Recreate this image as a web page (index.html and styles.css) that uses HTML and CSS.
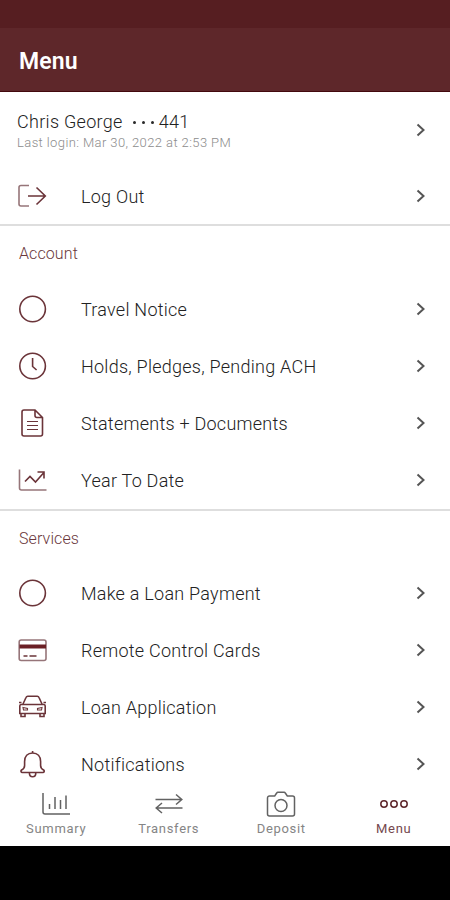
FILE: index.html
```html
<!DOCTYPE html>
<html lang="en">
<head>
<meta charset="utf-8">
<title>Menu</title>
<link rel="stylesheet" href="styles.css">
</head>
<body>
<svg class="defs" aria-hidden="true">
  <symbol id="chevron" viewBox="0 0 10 14"><path d="M1.500 1.500 7.500 7 1.500 12.500"/></symbol>
  <symbol id="circle" viewBox="0 0 30 30"><circle cx="14.600" cy="15" r="12.800"/></symbol>
</svg>
<div class="phone">
  <div class="status"></div>
  <header class="header"><h1>Menu</h1></header>
  <main class="content">
    <section class="section">
      <a class="profile">
        <div class="who">
          <div class="name">Chris George<span class="mask"><i></i><i></i><i></i></span>441</div>
          <div class="login">Last login: Mar 30, 2022 at 2:53 PM</div>
        </div>
        <svg class="chevron"><use href="#chevron"/></svg>
      </a>
      <a class="row logout">
        <svg class="icon" viewBox="0 0 30 30"><path class="muted" d="M11 4.500H3a2 2 0 0 0-2 2v16.500a2 2 0 0 0 2 2h8"/><path d="M10 15h17M18.500 6.500l8.800 8.500-8.800 8.500"/></svg>
        <span class="label">Log Out</span>
        <svg class="chevron"><use href="#chevron"/></svg>
      </a>
    </section>
    <section class="section">
      <h2>Account</h2>
      <a class="row"><svg class="icon"><use href="#circle"/></svg><span class="label">Travel Notice</span><svg class="chevron"><use href="#chevron"/></svg></a>
      <a class="row"><svg class="icon"><use href="#circle"/><path d="M14.600 7v8.500l4 3.500"/></svg><span class="label">Holds, Pledges, Pending ACH</span><svg class="chevron"><use href="#chevron"/></svg></a>
      <a class="row"><svg class="icon" viewBox="0 0 30 30"><path d="M17 2H6a2 2 0 0 0-2 2v22a2 2 0 0 0 2 2h16.500a2 2 0 0 0 2-2V9.500ZM17 2v5.500a2 2 0 0 0 2 2h5.500"/><path class="thin" d="M9 13.500h11M9 17.500h11M9 21.500h11"/></svg><span class="label">Statements + Documents</span><svg class="chevron"><use href="#chevron"/></svg></a>
      <a class="row"><svg class="icon" viewBox="0 0 30 30"><path class="muted" d="M1.500 4.500v18.500a2 2 0 0 0 2 2h25"/><path d="m7 16.500 5-5 5.500 5.500 8-9M19.500 7h6.500v6.500"/></svg><span class="label">Year To Date</span><svg class="chevron"><use href="#chevron"/></svg></a>
    </section>
    <section class="section">
      <h2>Services</h2>
      <a class="row"><svg class="icon"><use href="#circle"/></svg><span class="label">Make a Loan Payment</span><svg class="chevron"><use href="#chevron"/></svg></a>
      <a class="row"><svg class="icon" viewBox="0 0 30 30"><rect class="muted" x="1.200" y="5" width="26.800" height="20.500" rx="2"/><path class="stripe" d="M1.500 11.500h26.500"/><path d="M5.500 21h4m2 0h7"/></svg><span class="label">Remote Control Cards</span><svg class="chevron"><use href="#chevron"/></svg></a>
      <a class="row"><svg class="icon" viewBox="0 0 30 30"><path d="M5 12 8 5.500a2 2 0 0 1 2-1.200h9a2 2 0 0 1 2 1.200L24 12M3 12.500h23a1.500 1.500 0 0 1 1.200 1.500v7.500H1.800V14a1.500 1.500 0 0 1 1.200-1.500ZM3.500 10.500H1M25.500 10.500h2.500M3 21.500v3h4v-3M22 21.500v3h4v-3"/><path class="thin" d="M5 15.500l4.500 1v1.500h-4zM24 15.500l-4.500 1v1.500h4z"/></svg><span class="label">Loan Application</span><svg class="chevron"><use href="#chevron"/></svg></a>
      <a class="row"><svg class="icon" viewBox="0 0 30 30"><path d="M14.600 2v2M14.600 4c-5 0-8 3.500-8 8.500v4c0 2-1 3.500-3 4.500-1 .7-.8 2.500.8 2.500h20.400c1.600 0 1.800-1.800.8-2.500-2-1-3-2.500-3-4.500v-4c0-5-3-8.500-8-8.500ZM11.400 24c0 5 6.400 5 6.400 0"/></svg><span class="label">Notifications</span><svg class="chevron"><use href="#chevron"/></svg></a>
    </section>
  </main>
  <nav class="tabs">
    <a class="tab"><svg class="tab-icon" viewBox="0 0 30 28"><path d="M2 3v19a2 2 0 0 0 2 2h25M8.500 14v5M14 7v12M19.500 10v9M25 5.500V19"/></svg><span>Summary</span></a>
    <a class="tab"><svg class="tab-icon" viewBox="0 0 30 28"><path d="M1.500 9.500h26M22 4.500l5.800 5-5.800 5M28.500 18h-26M8 13l-5.800 5L8 23"/></svg><span>Transfers</span></a>
    <a class="tab"><svg class="tab-icon" viewBox="0 0 30 28"><path d="M3.500 6h5.200l2-3a1.500 1.500 0 0 1 1.200-.7h6.200a1.500 1.500 0 0 1 1.200.7l2 3h5.200a2 2 0 0 1 2 2V24a2 2 0 0 1-2 2h-23a2 2 0 0 1-2-2V8a2 2 0 0 1 2-2Z"/><circle cx="15" cy="15.500" r="6"/></svg><span>Deposit</span></a>
    <a class="tab active"><svg class="tab-icon" viewBox="0 0 30 28"><circle cx="5" cy="14" r="3.200"/><circle cx="15" cy="14" r="3.200"/><circle cx="25" cy="14" r="3.200"/></svg><span>Menu</span></a>
  </nav>
  <div class="system"></div>
</div>
</body>
</html>
```
FILE: styles.css
```css
* { box-sizing: border-box; }
body { margin: 0; background: #fff; font-family: Roboto, sans-serif; color: #222; }
.defs { position: absolute; width: 0; height: 0; }
.phone { width: 450px; height: 900px; display: flex; flex-direction: column; overflow: hidden; }
.status { height: 28px; flex: none; background: #561e21; }
.header { height: 64px; flex: none; display: flex; align-items: center; padding: 5px 19px 0; background: #5e272a; border-bottom: 1px solid #43090d; }
h1 { margin: 0; font-size: 23px; line-height: 30px; font-weight: 600; letter-spacing: .1px; color: #fff; }
.content { flex: 1; min-height: 0; overflow: hidden; }
.section + .section { border-top: 2px solid #dedede; }
.profile { height: 76px; display: flex; align-items: center; justify-content: space-between; padding: 0 24px 0 17px; }
.who { padding-top: 4px; }
.name { display: flex; align-items: center; font-size: 18px; line-height: 22px; font-weight: 350; letter-spacing: .3px; }
.mask { display: flex; gap: 6px; margin: 0 5px 0 10px; }
.mask i { width: 3px; height: 3px; border-radius: 50%; background: #292929; }
.login { font-size: 13px; line-height: 20px; font-weight: 350; letter-spacing: .4px; color: #8c8c8c; }
.row { height: 57px; display: flex; align-items: center; padding: 0 24px 0 18px; }
.section + .section .row { padding-bottom: 1px; }
.row.logout { height: 56px; }
.icon { width: 30px; height: 30px; flex: none; fill: none; stroke: #6b3439; stroke-width: 1.6; }
.icon .thin { stroke-width: 1.1; }
.icon .muted { stroke: #967579; }
.icon .stripe { stroke: #6b1f25; stroke-width: 4; }
.label { flex: 1; margin-left: 33px; padding-top: 2px; font-size: 18px; line-height: 24px; font-weight: 330; letter-spacing: .25px; }
.chevron { width: 10px; height: 14px; flex: none; fill: none; stroke: #555; stroke-width: 2; }
h2 { margin: 0; height: 55px; padding-left: 19px; font-size: 16px; line-height: 56px; font-weight: 330; letter-spacing: .1px; color: #6a373b; }
.section:last-child h2 { height: 54px; }
.tabs { height: 60px; flex: none; display: grid; grid-template-columns: repeat(4, 1fr); background: #fff; }
.tab { display: flex; flex-direction: column; align-items: center; padding-top: 4px; font-size: 13px; line-height: 16px; letter-spacing: .7px; color: #858585; }
.tab-icon { width: 30px; height: 28px; margin-bottom: 3px; fill: none; stroke: #626262; stroke-width: 1.5; }
.active { color: #75484d; }
.active .tab-icon { stroke: #5e272c; }
.system { height: 54px; flex: none; background: #000; }
```
